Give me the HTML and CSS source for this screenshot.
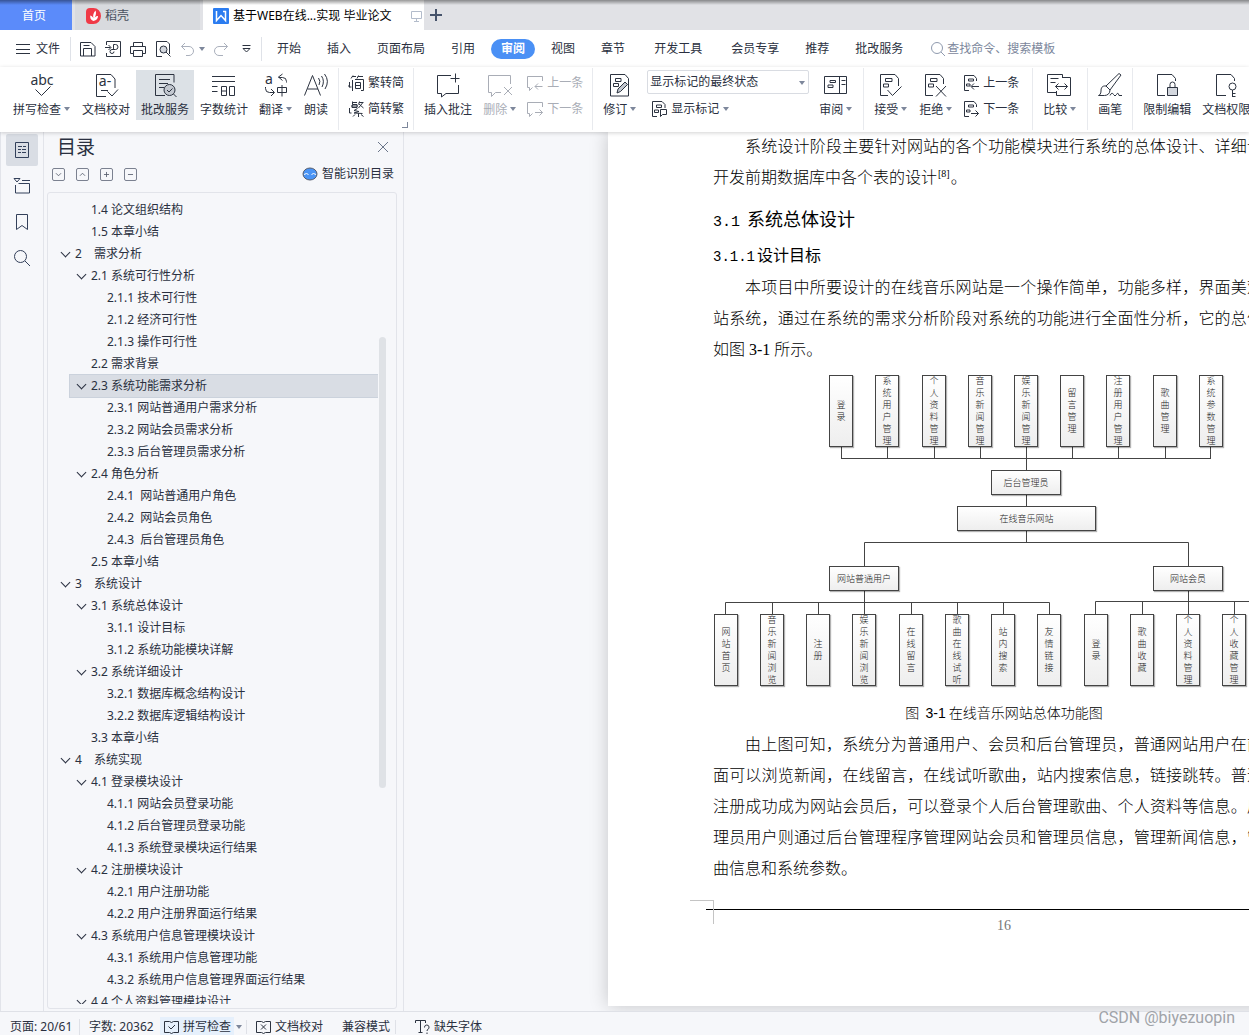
FILE: index.html
```
<!DOCTYPE html>
<html lang="zh-CN">
<head>
<meta charset="utf-8">
<title>基于WEB在线...实现 毕业论文</title>
<link rel="stylesheet" href="styles.css">
</head>
<body>
<header class="tabbar">
  <button class="tab tab-home">首页</button>
  <button class="tab tab-docer">
    <svg width="15" height="16" viewBox="0 0 15 16"><path d="M4 0h3.500a7.500 8 0 0 1 0 16H4a4 4 0 0 1-4-4V4a4 4 0 0 1 4-4z" fill="#f03a47"/><path d="M7.500 13C4.500 12 4 9.500 4.300 7.500 6 8 7 9 7.500 10.500 6.500 7.500 7.500 4.500 9.500 2.500 10.500 4.500 10 7.500 8.500 10 9.500 8.500 10.500 8 12 8 12 10.500 10.500 12.500 7.500 13Z" fill="#fff"/></svg>
    <span>稻壳</span>
  </button>
  <button class="tab tab-doc">
    <svg width="16" height="16" viewBox="0 0 16 16"><rect width="16" height="16" rx="1" fill="#2b7cf0"/><path d="M3.500 3v9.500L8 7.500l4.500 5V3.500H10" fill="none" stroke="#fff" stroke-width="1.500"/></svg>
    <span>基于WEB在线...实现 毕业论文</span>
    <svg class="screen" width="11" height="12" viewBox="0 0 11 12" fill="none" stroke="#b3bccb"><path d="M.5 1.500h10v7H.5zM5.500 8.500v3M3 11.500h5"/></svg>
  </button>
  <button class="tab-add" aria-label="新建"><svg width="12" height="12" viewBox="0 0 12 12" stroke="#46536b" stroke-width="2"><path d="M6 0v12M0 6h12"/></svg></button>
</header>

<nav class="menubar">
  <button class="file"><svg width="15" height="12" viewBox="0 0 15 12" stroke="#2c3340"><path d="M0 1.500h14M0 6.500h14M0 10.500h14"/></svg>文件</button>
  <div class="quick">
    <button aria-label="保存"><svg width="16" height="16" viewBox="0 0 16 16"><path d="M.5 1.500h10.500l4 4v9.500H.5zM3.500 15V7.500h8V15M3.500 4.500h6"/></svg></button>
    <button aria-label="输出为PDF"><svg width="16" height="16" viewBox="0 0 16 16"><path d="M1.500 4V.5h14v15h-14V12M0 6.500h5.500M3.500 4l2.500 2.500L3.500 9M8.500 3.500V9M8.500 3.500h2a2.500 2.500 0 0 1 0 5H7a2 2 0 1 0 2 2"/></svg></button>
    <button aria-label="打印"><svg width="16" height="16" viewBox="0 0 16 16"><path d="M3.500 5.500v-4h9v4M3.500 12.500h-3v-7h15v7h-3M3.500 9.500h9v6h-9z"/></svg></button>
    <button aria-label="打印预览"><svg width="16" height="16" viewBox="0 0 16 16"><path d="M7 15.500H1.500V.5H12l2.500 2.500V13"/><circle cx="8.500" cy="8.500" r="3.500" fill="#d3d7de"/><path d="M11 11l4.500 4.500"/></svg></button>
    <button class="off" aria-label="撤销"><svg width="16" height="16" viewBox="0 0 16 16"><path d="M5 2L1.500 5.500 5 9M1.500 5.500H9a4.500 4.500 0 0 1 0 9H6"/></svg></button>
    <span class="caret"></span>
    <button class="off redo" aria-label="恢复"><svg width="16" height="16" viewBox="0 0 16 16"><path d="M11 2l3.500 3.500L11 9M14.500 5.500H6a4.500 4.500 0 0 0 0 9h4"/></svg></button>
    <button class="more" aria-label="更多"><svg width="9" height="8" viewBox="0 0 9 8"><path d="M.5.5h8M1 3.500h7L4.500 7z"/></svg></button>
  </div>
  <div class="menus">
    <button>开始</button><button>插入</button><button>页面布局</button><button>引用</button><button class="current"><span>审阅</span></button><button>视图</button><button>章节</button><button class="wide">开发工具</button><button>会员专享</button><button>推荐</button><button>批改服务</button>
  </div>
  <label class="search"><svg width="14" height="14" viewBox="0 0 14 14" fill="none" stroke="#8f9aae"><circle cx="6" cy="6" r="5.500"/><path d="M10 10l4 4"/></svg><input type="text" placeholder="查找命令、搜索模板" aria-label="查找命令、搜索模板"></label>
</nav>

<section class="ribbon">
  <button class="big"><svg viewBox="0 0 24 24"><text x="12" y="12" text-anchor="middle">abc</text><path d="M5.500 16.500l6 6 9-9"/></svg><span>拼写检查<i class="caret"></i></span></button>
  <button class="big"><svg viewBox="0 0 24 24"><path d="M12 23.500H2.500v-22H17l4 4.500v9M7 17.500h7M13.500 18.500l4.500 4.500 6-6.500"/><text x="11" y="13" text-anchor="middle">a-</text></svg><span>文档校对</span></button>
  <button class="big on"><svg viewBox="0 0 24 24"><path d="M12 22.500H2.500v-21h18.500v8M6 6.500h11M6 10.500h9M6 14.500h5"/><circle cx="16.500" cy="17" r="5.500" fill="#c3c8d0"/><path d="M14 17l2 2 3.500-3.500M20.500 21l3 3"/></svg><span>批改服务</span></button>
  <button class="big"><svg viewBox="0 0 24 24"><path d="M0 3.500h23M0 8.500h23M0 13.500h5.500M0 18.500h5.500M9.500 13.500h5v9h-5zM9.500 18h5M17.500 13.500h5v9h-5z"/></svg><span>字数统计</span></button>
  <button class="big"><svg viewBox="0 0 24 24"><text x="5" y="11" text-anchor="middle">a</text><path d="M18.500 1l-4 3 4 3.500M14.500 4.500h4a4 4 0 0 1 4 4v1M13.500 14.500h9v5h-9zM18 12v11.500M1.500 14v1.500a4 4 0 0 0 4 4H10M7 16l3.500 3.500L7 23"/></svg><span>翻译<i class="caret"></i></span></button>
  <button class="big"><svg viewBox="0 0 24 24"><path d="M.5 22.500L8.500 2.500l8 20M3.500 16h10.500M14.500 5q2.500 3 .5 7M17.500 3q3.500 5 .5 11M20.500 1q5.500 7 .5 15"/></svg><span>朗读</span></button>
  <div class="sep"></div>
  <div class="col corner">
    <button class="small"><svg viewBox="0 0 16 16"><path d="M5 .5L3 3.500M4 1.500h4M10.500.5L9 3.500M10 1.500h5M4.500 5v11M7 4.500h8.500v11H13M7.500 7.500h5v6h-5zM7.500 10.500h5M1.500 7v5h2M.5 10.500l1 2"/></svg>繁转简</button>
    <button class="small"><svg viewBox="0 0 16 16"><path d="M4.500.5v3M4 1.500h5M4.500 3.500h4.500v3h-5zM3 5h7M11.500.5l-1 3M11 1.500h4.500M14.500 2l-4 5M11 3l4.500 4M9.500 7.500L6 9.500l5 1L6 12l8.500.500M10.500 12v4M7 13.500l-2 2M13 13.500l2.500 2M1.500 7v5h2"/></svg>简转繁</button>
  </div>
  <div class="sep"></div>
  <button class="big"><svg viewBox="0 0 24 24"><path d="M15 2.500H1.500v18h4v3.500l4.500-3.500h12.500V12M14.500 5.500h9M19.500.5v9"/></svg><span>插入批注</span></button>
  <button class="big off"><svg viewBox="0 0 24 24"><path d="M22.500 11V2.500H.5v17h3v4l4-4H13M16 14l8 8M24 14l-8 8"/></svg><span>删除<i class="caret"></i></span></button>
  <div class="col">
    <button class="small off"><svg viewBox="0 0 16 16"><path d="M15.500 6V1.500H.5v11h2v3l3-3M15.500 11.500H8M11 8.500l-3 3 3 3"/></svg>上一条</button>
    <button class="small off"><svg viewBox="0 0 16 16"><path d="M15.500 6V1.500H.5v11h2v3l3-3M8 11.500h7.500M12.500 8.500l3 3-3 3"/></svg>下一条</button>
  </div>
  <div class="sep"></div>
  <button class="big"><svg viewBox="0 0 24 24"><path d="M2.500 1.500H17l3.500 4v17.500h-18zM7.500 5.500h5.500v3H7.500zM5.500 10.500h5v3h-5z"/><path d="M9 20l1-4 7-7 2.500 2.500-7 7z" fill="#c3c8d0"/></svg><span>修订<i class="caret"></i></span></button>
  <div class="col marks">
    <label class="pick"><select aria-label="显示标记状态"><option>显示标记的最终状态</option></select><i class="caret"></i></label>
    <button class="small"><svg viewBox="0 0 16 16"><path d="M6 15.500H1.500V.5H11l3 3V7M5.500 4h5v2.500h-5zM3.500 9h4v2.500h-4zM9.500 8.500h6v5h-4l-2 2z"/></svg>显示标记<i class="caret"></i></button>
  </div>
  <button class="big"><svg viewBox="0 0 24 24"><path d="M.5 3.500h22v17H.5zM15.500 3.500v17M6 7.500h5.500v2H6zM4 12h5v2.500H4zM17.500 7.500h4M17.500 11.500h4"/></svg><span>审阅<i class="caret"></i></span></button>
  <div class="sep"></div>
  <button class="big"><svg viewBox="0 0 24 24"><path d="M9 22.500H1.500v-21H16l3.500 4V13M6.500 5.500h6.500v3H6.500zM4.500 11h5v3h-5zM8.500 17l5 5.500 9-9"/></svg><span>接受<i class="caret"></i></span></button>
  <button class="big"><svg viewBox="0 0 24 24"><path d="M9 22.500H1.500v-21H16l3.500 4V11M6.500 5.500h6.500v3H6.500zM4.500 11h5v3h-5zM12 13l10 10.500M22 13L12 23.500"/></svg><span>拒绝<i class="caret"></i></span></button>
  <div class="col nav">
    <button class="small"><svg viewBox="0 0 16 16"><path d="M6 15.500H1.500V.5H11l2.500 3V6M5.500 4h5v2h-5zM3.500 9h3.500v2H3.500zM16 11.500H8.500M11 8.500l-3 3 3 3"/></svg>上一条</button>
    <button class="small"><svg viewBox="0 0 16 16"><path d="M6 15.500H1.500V.5H11l2.500 3V6M5.500 4h5v2h-5zM3.500 9h3.500v2H3.500zM8 12.500h7.500M12.500 9.500l3 3-3 3"/></svg>下一条</button>
  </div>
  <div class="sep"></div>
  <button class="big"><svg viewBox="0 0 24 24"><path d="M8 19.500H-.5v-18h15v3M14 4.500h8.500v18h-14V18M2.500 5.500h8M2.500 9.500h5M7.500 13.500h12M10.500 10.500l-3 3 3 3M16.500 10.500l3 3-3 3"/></svg><span>比较<i class="caret"></i></span></button>
  <div class="sep"></div>
  <button class="big"><svg viewBox="0 0 24 24"><path d="M8 13L21 .5l2 1.500L12 17zM8 13c-4-.500-5 2-5 5s-1.500 4-2.500 4.500h6c3 0 5.500-2 5.500-5.500zM12 22.500q2-4 3.500-1t3 0 2.500 1h3"/></svg><span>画笔</span></button>
  <div class="sep"></div>
  <button class="big"><svg viewBox="0 0 24 24"><path d="M10 22.500H2.500v-21H17l3.500 4V8M15 14v-2.500a2.500 2.500 0 0 1 5 0V14"/><path d="M12.500 14.500h10v8h-10z" fill="#d3d7de"/></svg><span>限制编辑</span></button>
  <button class="big"><svg viewBox="0 0 24 24"><path d="M12 22.500H2.500v-21H17l3.500 4V8M18.500 17v7M18.500 20.500h3M18.500 23.500h3"/><circle cx="18.500" cy="13.500" r="3.500"/></svg><span>文档权限</span></button>
</section>

<main class="main">
  <aside class="rail">
    <button class="on" aria-label="目录"><svg viewBox="0 0 16 16"><path d="M1.500.5h13v15h-13zM4 4.500h4M4 7.500h3M4 10.500h3M9 4.500h3M8 7.500h4M8 10.500h4"/></svg></button>
    <button aria-label="章节"><svg viewBox="0 0 16 16"><path d="M0 .5h6l-3 3.500zM1.500 7v8h14V5.500h-11M8 2.500h8"/></svg></button>
    <button aria-label="书签"><svg viewBox="0 0 16 16"><path d="M2.500.5h11v15L8 11.500l-5.500 4z"/></svg></button>
    <button aria-label="查找"><svg viewBox="0 0 16 16"><circle cx="6.500" cy="6.500" r="6"/><path d="M11 11l5 5"/></svg></button>
  </aside>
  <section class="outline">
    <header><h1>目录</h1><button aria-label="关闭"><svg width="10" height="10" viewBox="0 0 10 10" stroke="#6b768a"><path d="M0 0l10 10M10 0L0 10"/></svg></button></header>
    <div class="tools">
      <button aria-label="展开"><svg viewBox="0 0 13 13"><path d="M3.500 5l3 3 3-3"/></svg></button>
      <button aria-label="收起"><svg viewBox="0 0 13 13"><path d="M3.500 8l3-3 3 3"/></svg></button>
      <button aria-label="增加"><svg viewBox="0 0 13 13"><path d="M3.500 6.500h6M6.500 3.500v6"/></svg></button>
      <button aria-label="减少"><svg viewBox="0 0 13 13"><path d="M3.500 6.500h6"/></svg></button>
      <button class="smart"><svg width="14" height="12" viewBox="0 0 14 12"><ellipse cx="7" cy="6" rx="7" ry="6" fill="#4a94f5"/><path d="M1 6.500L3.500 5.500l2 1M8.500 6.500l2-1 2.500 1" fill="none" stroke="#fff" stroke-width="1"/></svg>智能识别目录</button>
    </div>
    <div class="treebox">
      <ul class="tree">
        <li class="l1"><a href="#">1.4 论文组织结构</a></li>
        <li class="l1"><a href="#">1.5 本章小结</a></li>
        <li class="l0 open"><a href="#"><b>2</b>需求分析</a></li>
        <li class="l1 open"><a href="#">2.1 系统可行性分析</a></li>
        <li class="l2"><a href="#">2.1.1 技术可行性</a></li>
        <li class="l2"><a href="#">2.1.2 经济可行性</a></li>
        <li class="l2"><a href="#">2.1.3 操作可行性</a></li>
        <li class="l1"><a href="#">2.2 需求背景</a></li>
        <li class="l1 open picked"><a href="#">2.3 系统功能需求分析</a></li>
        <li class="l2"><a href="#">2.3.1 网站普通用户需求分析</a></li>
        <li class="l2"><a href="#">2.3.2 网站会员需求分析</a></li>
        <li class="l2"><a href="#">2.3.3 后台管理员需求分析</a></li>
        <li class="l1 open"><a href="#">2.4 角色分析</a></li>
        <li class="l2"><a href="#">2.4.1&nbsp; 网站普通用户角色</a></li>
        <li class="l2"><a href="#">2.4.2&nbsp; 网站会员角色</a></li>
        <li class="l2"><a href="#">2.4.3&nbsp; 后台管理员角色</a></li>
        <li class="l1"><a href="#">2.5 本章小结</a></li>
        <li class="l0 open"><a href="#"><b>3</b>系统设计</a></li>
        <li class="l1 open"><a href="#">3.1 系统总体设计</a></li>
        <li class="l2"><a href="#">3.1.1 设计目标</a></li>
        <li class="l2"><a href="#">3.1.2 系统功能模块详解</a></li>
        <li class="l1 open"><a href="#">3.2 系统详细设计</a></li>
        <li class="l2"><a href="#">3.2.1 数据库概念结构设计</a></li>
        <li class="l2"><a href="#">3.2.2 数据库逻辑结构设计</a></li>
        <li class="l1"><a href="#">3.3 本章小结</a></li>
        <li class="l0 open"><a href="#"><b>4</b>系统实现</a></li>
        <li class="l1 open"><a href="#">4.1 登录模块设计</a></li>
        <li class="l2"><a href="#">4.1.1 网站会员登录功能</a></li>
        <li class="l2"><a href="#">4.1.2 后台管理员登录功能</a></li>
        <li class="l2"><a href="#">4.1.3 系统登录模块运行结果</a></li>
        <li class="l1 open"><a href="#">4.2 注册模块设计</a></li>
        <li class="l2"><a href="#">4.2.1 用户注册功能</a></li>
        <li class="l2"><a href="#">4.2.2 用户注册界面运行结果</a></li>
        <li class="l1 open"><a href="#">4.3 系统用户信息管理模块设计</a></li>
        <li class="l2"><a href="#">4.3.1 系统用户信息管理功能</a></li>
        <li class="l2"><a href="#">4.3.2 系统用户信息管理界面运行结果</a></li>
        <li class="l1 open"><a href="#">4.4 个人资料管理模块设计</a></li>
      </ul>
      <div class="thumb"></div>
    </div>
  </section>
  <section class="workspace">
    <article class="page">
      <p>系统设计阶段主要针对网站的各个功能模块进行系统的总体设计、详细设开发前期数据库中各个表的设计<sup>[8]</sup>。</p>
      <h2><span>3.1</span>系统总体设计</h2>
      <h3><span>3.1.1</span>设计目标</h3>
      <p>本项目中所要设计的在线音乐网站是一个操作简单，功能多样，界面美观站系统，通过在系统的需求分析阶段对系统的功能进行全面性分析，它的总体如图 3-1 所示。</p>
      <figure>
        <div class="chart">
          <svg width="550" height="312" viewBox="0 0 550 312" fill="none" stroke="#444"><path d="M128.500 72v11.500M174.500 72v11.500M221.500 72v11.500M267.500 72v11.500M359.500 72v11.500M405.500 72v11.500M452.500 72v11.500M497.500 72v11.500M128 83.500h370M313.500 72v95.500M151.500 240V167.500h324V240M12.500 240v-12.500h324V240M59.500 227v12M105.500 227v12M198.500 227v12M244.500 227v12M290.500 227v12M382.500 240v-13.500H550M429.500 227v12M521.500 227v12"/></svg>
          <div class="node v" style="left:116px;top:0">登录</div>
          <div class="node v" style="left:162px;top:0">系统用户管理</div>
          <div class="node v" style="left:209px;top:0">个人资料管理</div>
          <div class="node v" style="left:255px;top:0">音乐新闻管理</div>
          <div class="node v" style="left:301px;top:0">娱乐新闻管理</div>
          <div class="node v" style="left:347px;top:0">留言管理</div>
          <div class="node v" style="left:393px;top:0">注册用户管理</div>
          <div class="node v" style="left:440px;top:0">歌曲管理</div>
          <div class="node v" style="left:486px;top:0">系统参数管理</div>
          <div class="node" style="left:278px;top:95px">后台管理员</div>
          <div class="node root" style="left:244px;top:131px">在线音乐网站</div>
          <div class="node" style="left:116px;top:191px">网站普通用户</div>
          <div class="node" style="left:440px;top:191px">网站会员</div>
          <div class="node v" style="left:1px;top:239px">网站首页</div>
          <div class="node v" style="left:47px;top:239px">音乐新闻浏览</div>
          <div class="node v" style="left:93px;top:239px">注册</div>
          <div class="node v" style="left:139px;top:239px">娱乐新闻浏览</div>
          <div class="node v" style="left:186px;top:239px">在线留言</div>
          <div class="node v" style="left:232px;top:239px">歌曲在线试听</div>
          <div class="node v" style="left:278px;top:239px">站内搜索</div>
          <div class="node v" style="left:324px;top:239px">友情链接</div>
          <div class="node v" style="left:371px;top:239px">登录</div>
          <div class="node v" style="left:417px;top:239px">歌曲收藏</div>
          <div class="node v" style="left:463px;top:239px">个人资料管理</div>
          <div class="node v" style="left:509px;top:239px">个人收藏管理</div>
        </div>
        <figcaption>图&nbsp; <span>3-1</span> 在线音乐网站总体功能图</figcaption>
      </figure>
      <p>由上图可知，系统分为普通用户、会员和后台管理员，普通网站用户在前面可以浏览新闻，在线留言，在线试听歌曲，站内搜索信息，链接跳转。普通注册成功成为网站会员后，可以登录个人后台管理歌曲、个人资料等信息。后理员用户则通过后台管理程序管理网站会员和管理员信息，管理新闻信息，管曲信息和系统参数。</p>
      <footer><i class="mark"></i>16</footer>
    </article>
  </section>
</main>

<footer class="status">
  <span class="cell pages">页面: 20/61</span>
  <span class="cell words">字数: 20362</span>
  <button class="spell"><svg width="15" height="14" viewBox="0 0 15 14"><path d="M5.500 1.500h-5v11h5l2 1 2-1h5v-11h-5l-2 1zM4.500 6.500l2.500 2.500 4-4"/></svg>拼写检查</button>
  <i class="caret"></i><i class="bar"></i>
  <button class="proof"><svg width="15" height="14" viewBox="0 0 15 14"><path d="M5.500 1.500h-5v11h5l2 1 2-1h5v-11h-5l-2 1zM5 4.500l5 5M10 4.500l-5 5"/></svg>文档校对</button>
  <span class="compat">兼容模式</span><i class="bar"></i>
  <button class="fonts"><svg width="15" height="14" viewBox="0 0 15 14"><path d="M.5 3V.5h10V3M5.500.5v12M3.500 12.500h4M9.500 7.500V7a2.300 2.300 0 1 1 3 2.500l-.500 1.500M12 12.500v1.500"/></svg>缺失字体</button>
  <span class="credit">CSDN @biyezuopin</span>
</footer>
</body>
</html>
```
FILE: styles.css
```
* { box-sizing: border-box; }
body {
  margin: 0;
  height: 100vh;
  display: flex;
  flex-direction: column;
  overflow: hidden;
  background: #fff;
  color: #2a3040;
  font: 12px/16px "Noto Sans", "Noto Sans CJK SC", sans-serif;
}
button {
  margin: 0;
  padding: 0;
  border: 0;
  background: none;
  color: inherit;
  font: inherit;
  white-space: nowrap;
}
h1, h2, h3, p, ul, figure { margin: 0; padding: 0; }
svg { display: block; flex: none; overflow: visible; }
i { font-style: normal; }
.caret {
  display: inline-block;
  flex: none;
  border: 3px solid transparent;
  border-top: 4px solid #7d879b;
  border-bottom: 0;
  width: 6px;
}

/* window tabs */
.tabbar {
  position: relative;
  flex: none;
  display: flex;
  height: 30px;
  background: #e1e2e6;
}
.tabbar::before {
  content: "";
  position: absolute;
  inset: 0 0 auto;
  height: 5px;
  background: linear-gradient(rgba(0, 0, 0, .4), rgba(0, 0, 0, 0));
}
.tab { display: flex; align-items: center; padding-top: 2px; }
.tab-home { width: 72px; padding-left: 22px; background: #5b8bfa; color: #fff; }
.tab-docer { width: 125px; margin: 0 3px; padding-left: 11px; gap: 4px; background: #d8dade; color: #4a5160; }
.tab-doc { width: 221px; padding-left: 10px; gap: 4px; background: #fff; color: #000; }
.screen { margin-left: auto; margin-right: 2px; }
.tab-add { padding: 0 6px; }

/* menu row */
.menubar { flex: none; display: flex; align-items: center; height: 37px; padding-top: 1px; }
.file { display: flex; align-items: center; gap: 5px; padding: 0 10px 0 16px; border-right: 1px solid #dfe2e8; height: 24px; }
.quick { display: flex; align-items: center; gap: 9px; padding: 0 10px 0 9px; height: 24px; border-right: 1px solid #dfe2e8; }
.quick svg { fill: none; stroke: #2c3340; }
.quick .off svg { stroke: #aab0bc; }
.quick .caret { margin-left: -6px; }
.redo { margin-left: -1px; }
.more { margin-left: 4px; }
.menus { display: flex; margin-left: 2px; }
.menus button { padding: 0 13px; }
.menus .wide { padding: 0 16px; }
.menus .current { padding: 0 3px; }
.current span { display: block; padding: 2px 10px; border-radius: 10px; background: #4a90f5; color: #fff; font-weight: 700; }
.search { display: flex; align-items: center; gap: 2px; margin-left: 15px; }
.search input { width: 120px; padding: 0; border: 0; outline: 0; background: none; font: inherit; color: #2a3040; }
.search input::placeholder { color: #7c879c; opacity: 1; }

/* ribbon */
.ribbon {
  position: relative;
  z-index: 1;
  flex: none;
  display: flex;
  align-items: flex-start;
  gap: 1px;
  height: 65px;
  padding: 3px 0 0 8px;
  box-shadow: 0 1px 4px rgba(0, 0, 0, .18);
}
.ribbon svg { fill: none; stroke: #2c3340; }
.ribbon svg text { fill: #2c3340; stroke: none; font-size: 14px; }
.big { flex: none; display: flex; flex-direction: column; align-items: center; gap: 5px; height: 50px; padding: 3px 5px 0; }
.big svg { width: 24px; height: 24px; }
.big .caret { margin: 0 1px 3px 3px; }
.big.on { background: #dce1e6; }
.off { color: #a9adb6; }
.ribbon .off svg { stroke: #a9adb6; }
.sep { flex: none; width: 1px; height: 62px; margin: -2px 4px 0; background: #e8eaee; }
.col { flex: none; display: flex; flex-direction: column; align-items: flex-start; height: 58px; }
.small { display: flex; align-items: center; gap: 4px; height: 26px; padding: 0 4px; }
.small svg { width: 16px; height: 16px; }
.nav { padding-right: 4px; }
.marks { gap: 1px; padding: 0 4px; }
.marks .small { height: 28px; }
.corner { position: relative; }
.corner::after { content: ""; position: absolute; right: 0; bottom: 0; width: 5px; height: 5px; border: solid #7d879b; border-width: 0 1px 1px 0; }
.pick { position: relative; height: 24px; }
.pick select { width: 162px; height: 24px; padding: 0 2px; appearance: none; border: 1px solid #d9dce2; border-radius: 2px; background: #fff; color: inherit; font: inherit; }
.pick .caret { position: absolute; right: 4px; top: 11px; }

/* body */
.main { flex: 1; display: flex; min-height: 0; background: #f6f7fa; }
.rail { flex: none; display: flex; flex-direction: column; gap: 4px; width: 44px; padding: 2px 5px; border: solid #e2e4ea; border-width: 0 1px; }
.rail button { display: grid; place-items: center; height: 32px; width: 32px; border-radius: 2px; }
.rail .on { background: #d9dde4; }
.rail svg { width: 16px; height: 16px; fill: none; stroke: #33405a; }
.outline { flex: none; display: flex; flex-direction: column; width: 360px; padding: 0 6px 2px 3px; border-right: 1px solid #e2e4ea; }
.outline header { display: flex; align-items: center; justify-content: space-between; height: 30px; padding: 0 9px 0 10px; }
.outline h1 { font-size: 19px; font-weight: 400; line-height: 30px; }
.tools { display: flex; align-items: center; gap: 11px; height: 24px; margin-bottom: 6px; padding: 0 3px 0 5px; }
.tools button svg { width: 13px; height: 13px; border: 1px solid #7b8190; border-radius: 2px; fill: none; stroke: #555c6c; }
.tools .smart { display: flex; align-items: center; gap: 5px; margin-left: auto; }
.tools .smart svg { width: 14px; height: 12px; border: 0; }
.treebox { position: relative; flex: 1; min-height: 0; padding: 6px 18px 4px 0; border: 1px solid #e2e4ea; border-radius: 3px; }
.tree { height: 100%; overflow: hidden; list-style: none; }
.tree li { position: relative; height: 22px; line-height: 22px; }
.tree a { color: inherit; text-decoration: none; white-space: nowrap; }
.tree b { display: inline-block; width: 19px; font-weight: 400; }
.l0 { margin-left: 12px; padding-left: 15px; }
.l1 { margin-left: 22px; padding-left: 21px; }
.l2 { padding-left: 59px; }
.open::before { content: ""; position: absolute; left: 2px; top: 6px; width: 6px; height: 6px; border: solid #2a3040; border-width: 0 1px 1px 0; transform: rotate(45deg); }
.l1.open::before { left: 8px; }
.picked { background: #d9dde4; outline: 1px solid #cbd2dc; }
.thumb { position: absolute; right: 10px; top: 144px; width: 7px; height: 451px; border-radius: 4px; background: #dfe2e6; }

/* document */
.workspace { flex: 1; min-width: 0; overflow: hidden; }
.page {
  width: 792px;
  height: calc(100% - 4px);
  margin: -1px 0 0 204px;
  padding: 0 105px;
  background: #fff;
  box-shadow: 0 0 18px rgba(0, 0, 0, .2);
  color: #000;
  font: 300 16px/31px "Liberation Serif", "Noto Sans CJK SC", serif;
}
.page p { width: 550px; text-indent: 32px; text-align: justify; line-break: anywhere; }
.page sup { margin: 0 1px; font-size: 10px; line-height: 1; text-indent: 0; }
.page h2 { margin-top: 7px; font: 400 18px/36px "Noto Sans CJK SC", sans-serif; }
.page h3 { font: 400 16px/36px "Noto Sans CJK SC", sans-serif; }
.page h2 span { margin-right: 7px; font: 15px "Liberation Mono", monospace; }
.page h3 span { margin-right: 2px; font: 14px "Liberation Mono", monospace; }
.page figure { padding-top: 10px; }
.chart { position: relative; width: 550px; height: 312px; }
.node {
  position: absolute;
  display: flex;
  align-items: center;
  justify-content: center;
  width: 70px;
  height: 25px;
  border: 1px solid #444;
  background: linear-gradient(#fff, #eee);
  box-shadow: 1px 1px 1px rgba(0, 0, 0, .3);
  color: #222;
  font: 9px/12px "Noto Sans CJK SC", sans-serif;
  font-weight: 300;
}
.root { width: 139px; }
.v { width: 24px; height: 72px; padding: 0 6px; text-align: center; word-break: break-all; }
.page figcaption { padding-top: 9px; font: 300 14px/32px "Noto Sans CJK SC", sans-serif; text-align: center; }
.page figcaption span { font-family: "Liberation Sans", sans-serif; }
.page footer { position: relative; margin: 25px 0 0 -7px; padding-left: 7px; border-top: 1px solid #000; color: #777; font-size: 14px; text-align: center; }
.mark { position: absolute; left: -16px; top: -10px; width: 24px; height: 24px; border: solid #c4c4c4; border-width: 1px 1px 0 0; }

/* status bar */
.status { flex: none; display: flex; align-items: center; height: 24px; padding: 6px 14px 0 10px; border-top: 1px solid #dfe1e7; background: #f6f7fa; white-space: nowrap; }
.status svg { fill: none; stroke: #2c3340; }
.status button { display: flex; align-items: center; gap: 4px; }
.pages { width: 70px; border-right: 1px solid #dfe1e7; }
.words { width: 80px; padding-left: 9px; }
.status .spell { height: 20px; padding: 0 3px 0 4px; background: #e6f0fc; }
.status .caret { margin: 0 4px 0 2px; }
.bar { width: 1px; height: 14px; background: #dfe1e7; }
.proof { margin-left: 9px; }
.compat { margin: 0 5px 0 19px; }
.fonts { margin-left: 19px; }
.credit { align-self: flex-start; margin: -9px 0 0 auto; color: #a0a3a8; font: 16px/18px Roboto, "Liberation Sans", sans-serif; }
```
